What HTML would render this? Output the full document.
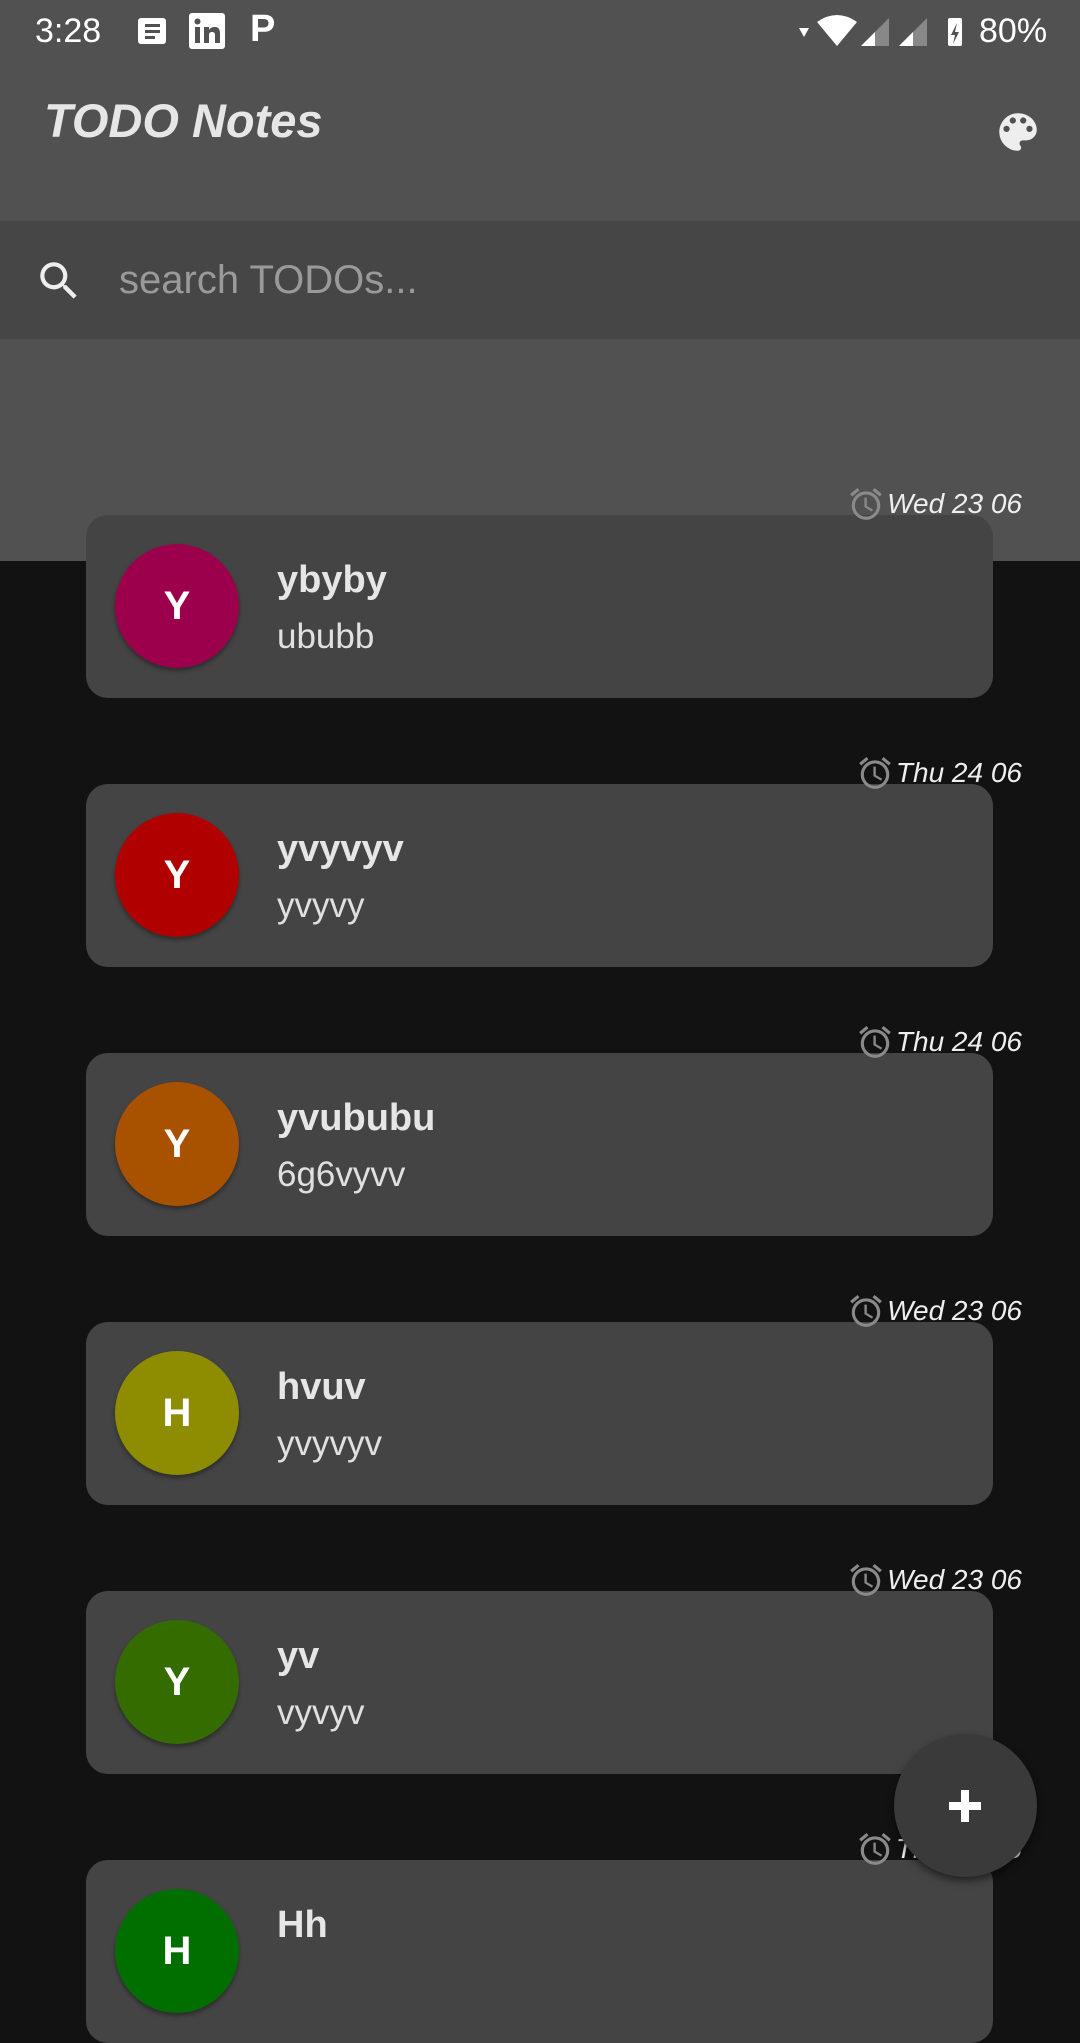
<!DOCTYPE html>
<html><head><meta charset="utf-8"><style>
*{margin:0;padding:0;box-sizing:border-box}
body{width:1080px;height:1920px;overflow:hidden;background:#121212;font-family:"Liberation Sans",Roboto,sans-serif;position:relative;color:#e8e8e8}
.top{position:absolute;left:0;top:0;width:1080px;height:221px;background:#515151}
.search{position:absolute;left:0;top:221px;width:1080px;height:118px;background:#464646}
.band{position:absolute;left:0;top:339px;width:1080px;height:222px;background:#515151}
.abs{position:absolute}
.card{position:absolute;left:86px;width:907px;height:183px;background:#444;border-radius:22px}
.av{position:absolute;left:29px;top:29px;width:124px;height:124px;border-radius:50%;color:#fff;font-weight:bold;font-size:40px;text-align:center;line-height:124px;box-shadow:0 3px 4px rgba(0,0,0,.35)}
.t{position:absolute;left:191px;top:44px;font-size:38px;font-weight:bold;color:#e6e6e6}
.s{position:absolute;left:191px;top:102px;font-size:35px;color:#e0e0e0}
.date{position:absolute;right:58px;font-size:28px;font-style:italic;color:#eee;display:flex;align-items:center;gap:2px;z-index:2}
</style></head><body>
<div class="top"></div><div class="search"></div><div class="band"></div>
<div class="abs" style="left:35px;top:12px;font-size:34px;color:#fff">3:28</div>
<svg class="abs" style="left:136px;top:16px" width="32" height="30"><rect x="2" y="2" width="28" height="26" rx="3" fill="#fff"/><rect x="9" y="8" width="15" height="3" fill="#515151"/><rect x="9" y="14" width="15" height="3" fill="#515151"/><rect x="9" y="20" width="10" height="3" fill="#515151"/></svg>
<svg class="abs" style="left:189px;top:13px" width="36" height="36"><rect width="36" height="36" rx="3" fill="#fff"/><rect x="6" y="14" width="5" height="16" fill="#515151"/><circle cx="8.5" cy="8.5" r="3" fill="#515151"/><path d="M15 14h5v3c1-2 3-3 6-3 4 0 5 3 5 7v9h-5v-8c0-2-1-3-3-3s-3 1-3 3v8h-5z" fill="#515151"/></svg>
<div class="abs" style="left:250px;top:8px;font-size:38px;font-weight:bold;color:#fff">P</div>
<svg class="abs" style="left:795px;top:14px" width="260" height="36"><path d="M4 14l10 0-5 9z" fill="#fff"/><path d="M22 8q20-14 40 0l-20 24z" fill="#fff"/><path d="M66 32l28-28v28z" fill="#888"/><path d="M66 32l14-14v14z" fill="#fff"/><path d="M104 32l28-28v28z" fill="#888"/><path d="M104 32l14-14v14z" fill="#fff"/><rect x="153" y="4" width="14" height="28" rx="2" fill="#fff"/><path d="M162 9l-6 12h4l-2 9 6-12h-4z" fill="#515151"/></svg>
<div class="abs" style="left:979px;top:12px;font-size:34px;color:#fff">80%</div>
<div class="abs" style="left:44px;top:93px;font-size:47px;font-weight:bold;font-style:italic;color:#e6e6e6">TODO Notes</div>
<svg class="abs" style="left:993px;top:107px" width="50" height="50" viewBox="0 0 24 24"><path fill="#eee" d="M12 3a9 9 0 0 0 0 18c.83 0 1.5-.67 1.5-1.5 0-.39-.15-.74-.39-1.01-.23-.26-.38-.61-.38-.99 0-.83.67-1.5 1.5-1.5H16c2.76 0 5-2.24 5-5 0-4.42-4.03-8-9-8zm-5.5 9a1.5 1.5 0 1 1 0-3 1.5 1.5 0 0 1 0 3zm3-4a1.5 1.5 0 1 1 0-3 1.5 1.5 0 0 1 0 3zm5 0a1.5 1.5 0 1 1 0-3 1.5 1.5 0 0 1 0 3zm3 4a1.5 1.5 0 1 1 0-3 1.5 1.5 0 0 1 0 3z"/></svg>
<svg class="abs" style="left:34px;top:256px" width="50" height="50" viewBox="0 0 24 24"><path fill="#eee" d="M15.5 14h-.79l-.28-.27A6.47 6.47 0 0 0 16 9.5 6.5 6.5 0 1 0 9.5 16c1.61 0 3.09-.59 4.23-1.57l.27.28v.79l5 4.99L20.49 19l-4.99-5zm-6 0C7.01 14 5 11.99 5 9.5S7.01 5 9.5 5 14 7.01 14 9.5 11.99 14 9.5 14z"/></svg>
<div class="abs" style="left:119px;top:258px;font-size:40px;color:#9a9a9a">search TODOs...</div>

<svg width="0" height="0" style="position:absolute"><defs><symbol id="al" viewBox="0 0 24 24"><path fill="#8a8a8a" d="M22 5.72l-4.6-3.86-1.29 1.53 4.6 3.86L22 5.72zM7.88 3.39L6.6 1.86 2 5.71l1.29 1.53 4.59-3.85zM12.5 8H11v6l4.75 2.85.75-1.23-4-2.37V8zM12 4a9 9 0 1 0 .01 18.01A9 9 0 0 0 12 4zm0 16c-3.87 0-7-3.13-7-7s3.13-7 7-7 7 3.13 7 7-3.13 7-7 7z"/></symbol></defs></svg>

<div class="date" style="top:485px"><svg width="38" height="38"><use href="#al"/></svg>Wed 23 06</div>
<div class="card" style="top:515px"><div class="av" style="background:#9c004c">Y</div><div class="t">ybyby</div><div class="s">ububb</div></div>
<div class="date" style="top:754px"><svg width="38" height="38"><use href="#al"/></svg>Thu 24 06</div>
<div class="card" style="top:784px"><div class="av" style="background:#b00000">Y</div><div class="t">yvyvyv</div><div class="s">yvyvy</div></div>
<div class="date" style="top:1023px"><svg width="38" height="38"><use href="#al"/></svg>Thu 24 06</div>
<div class="card" style="top:1053px"><div class="av" style="background:#a85200">Y</div><div class="t">yvububu</div><div class="s">6g6vyvv</div></div>
<div class="date" style="top:1292px"><svg width="38" height="38"><use href="#al"/></svg>Wed 23 06</div>
<div class="card" style="top:1322px"><div class="av" style="background:#8e8c00">H</div><div class="t">hvuv</div><div class="s">yvyvyv</div></div>
<div class="date" style="top:1561px"><svg width="38" height="38"><use href="#al"/></svg>Wed 23 06</div>
<div class="card" style="top:1591px"><div class="av" style="background:#356c00">Y</div><div class="t">yv</div><div class="s">vyvyv</div></div>
<div class="date" style="top:1830px"><svg width="38" height="38"><use href="#al"/></svg>Thu 24 06</div>
<div class="card" style="top:1860px"><div class="av" style="background:#006f00">H</div><div class="t">Hh</div></div>
<div class="abs" style="left:894px;top:1734px;width:143px;height:143px;border-radius:50%;background:#3a3a3a;box-shadow:0 4px 8px rgba(0,0,0,.5);z-index:3"><div class="abs" style="left:55px;top:68px;width:32px;height:8px;background:#fff"></div><div class="abs" style="left:67px;top:56px;width:8px;height:32px;background:#fff"></div></div>
</body></html>
